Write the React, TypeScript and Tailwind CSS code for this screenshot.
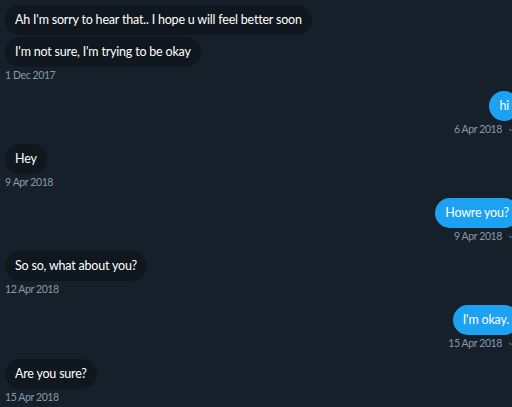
import { Check } from 'lucide-react';

type Message = {
  id: number;
  text: string;
  mine: boolean;
};

type Group = {
  mine: boolean;
  date: string;
  messages: Message[];
};

const groups: Group[] = [
  {
    mine: false,
    date: '1 Dec 2017',
    messages: [
      { id: 1, text: "Ah I'm sorry to hear that.. I hope u will feel better soon", mine: false },
      { id: 2, text: "I'm not sure, I'm trying to be okay", mine: false }
    ]
  },
  { mine: true, date: '6 Apr 2018', messages: [{ id: 3, text: 'hi', mine: true }] },
  { mine: false, date: '9 Apr 2018', messages: [{ id: 4, text: 'Hey', mine: false }] },
  { mine: true, date: '9 Apr 2018', messages: [{ id: 5, text: 'Howre you?', mine: true }] },
  { mine: false, date: '12 Apr 2018', messages: [{ id: 6, text: 'So so, what about you?', mine: false }] },
  { mine: true, date: '15 Apr 2018', messages: [{ id: 7, text: "I'm okay.", mine: true }] },
  { mine: false, date: '15 Apr 2018', messages: [{ id: 8, text: 'Are you sure?', mine: false }] }
];

function Bubble({ text, mine }: { text: string; mine: boolean }) {
  return (
    <div
      className={
        mine
          ? 'rounded-full bg-[#1da1f2] px-[10px] py-[5px] text-[12.5px] leading-[20px] tracking-[-0.2px] text-white'
          : 'rounded-full bg-[#10171e] px-[10px] py-[5px] text-[12.5px] leading-[20px] tracking-[-0.2px] text-white'
      }
    >
      {text}
    </div>
  );
}

function MessageGroup({ group }: { group: Group }) {
  return (
    <div className={group.mine ? 'flex flex-col items-end' : 'flex flex-col items-start'}>
      <div className={group.mine ? 'flex flex-col items-end gap-[2px]' : 'flex flex-col items-start gap-[2px]'}>
        {group.messages.map((message) => (
          <Bubble key={message.id} text={message.text} mine={message.mine} />
        ))}
      </div>
      <div className="mt-[1px] flex items-center gap-[6px] text-[10.5px] leading-[14px] tracking-[-0.4px] text-[#8899a6]">
        <span>{group.date}</span>
        {group.mine ? <Check size={8} strokeWidth={2.5} className="mr-[3px] text-[#8899a6]" /> : null}
      </div>
    </div>
  );
}

export default function App() {
  return (
    <div
      className="h-[407px] w-[512px] overflow-hidden bg-[#15202b]"
      style={{ fontFamily: 'Lato, "Noto Sans", sans-serif' }}
    >
      <div className="flex w-[519px] flex-col gap-[8.6px] pl-[5px] pt-[5px]">
        {groups.map((group, index) => (
          <MessageGroup key={index} group={group} />
        ))}
      </div>
    </div>
  );
}
